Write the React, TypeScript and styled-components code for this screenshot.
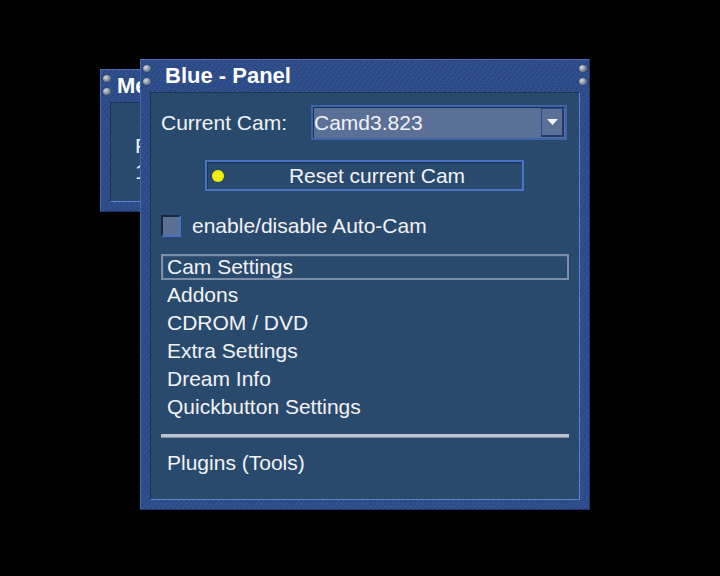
import * as React from "react";
import styled, { createGlobalStyle } from "styled-components";

const FRAME = "#2d4d8c";
const INNER = "#2a4a6d";
const TEXT = "#f2f2f4";
const FONT = `"Liberation Sans", Arial, sans-serif`;

const GlobalStyle = createGlobalStyle`
  html, body {
    margin: 0;
    padding: 0;
    background: #000;
  }
  body {
    font-family: ${FONT};
    color: ${TEXT};
  }
`;

const Desktop = styled.div`
  position: relative;
  width: 720px;
  height: 576px;
  background: #000;
  overflow: hidden;
`;

const Window = styled.div<{ x: number; y: number; w: number; h: number }>`
  position: absolute;
  left: ${({ x }) => x}px;
  top: ${({ y }) => y}px;
  width: ${({ w }) => w}px;
  height: ${({ h }) => h}px;
  box-sizing: border-box;
  overflow: hidden;
  display: flex;
  flex-direction: column;
  padding: 0 9px 9px;
  background-color: ${FRAME};
  background-image:
    repeating-linear-gradient(37deg, rgba(0, 0, 0, 0.09) 0 1px, transparent 1px 3px),
    repeating-linear-gradient(-53deg, rgba(255, 255, 255, 0.04) 0 1px, transparent 1px 4px);
  border-top: 1px solid #4a6cb0;
  border-left: 1px solid #4266a8;
  border-right: 1px solid #1d3566;
  border-bottom: 1px solid #1d3566;
`;

const TitleBar = styled.div<{ indent: number }>`
  height: 32px;
  flex: none;
  display: flex;
  align-items: center;
  padding-left: ${({ indent }) => indent}px;
  font-size: 22px;
  font-weight: bold;
  color: #fff;
  white-space: nowrap;
`;

const Screw = styled.span<{ side: "left" | "right"; top: number }>`
  position: absolute;
  ${({ side }) => (side === "left" ? "left: 2px;" : "right: 2px;")}
  top: ${({ top }) => top}px;
  width: 8px;
  height: 7px;
  border-radius: 50%;
  background: radial-gradient(circle at 35% 35%, #d8dde6 0, #8b94a6 45%, #3c475c 100%);
  box-shadow: 0 0 1px rgba(0, 0, 0, 0.6);
`;

const Inner = styled.div`
  flex: 1;
  display: flex;
  flex-direction: column;
  padding: 0 10px;
  background: ${INNER};
  border-top: 1px solid #1c3352;
  border-left: 1px solid #1c3352;
  border-right: 1px solid #5a82d0;
  border-bottom: 1px solid #5a82d0;
`;

const CamRow = styled.div`
  display: flex;
  align-items: center;
  height: 35px;
  margin-top: 12px;
`;

const Label = styled.span`
  font-size: 21px;
  width: 150px;
  flex: none;
`;

const Select = styled.div`
  width: 256px;
  height: 35px;
  box-sizing: border-box;
  display: flex;
  align-items: center;
  background: #5b7096;
  border: 2px solid #3f62ad;
  box-shadow: inset 1px 1px 0 #1c2f52;
  font-size: 21px;
  padding-left: 1px;
`;

const SelectValue = styled.span`
  flex: 1;
`;

const ArrowBox = styled.span`
  width: 23px;
  height: 29px;
  margin-right: 1px;
  box-sizing: border-box;
  display: flex;
  align-items: center;
  justify-content: center;
  border-left: 1px solid #2c4a8a;
  border-top: 1px solid #2c4a8a;
  border-right: 2px solid #21386a;
  border-bottom: 2px solid #21386a;
`;

const ResetButton = styled.div`
  margin: 20px 0 0 44px;
  width: 319px;
  height: 31px;
  box-sizing: border-box;
  display: flex;
  align-items: center;
  border: 2px solid #4673c4;
  box-shadow: inset 1px 1px 0 #1d3355;
  font-size: 21px;
`;

const Dot = styled.span`
  width: 12px;
  height: 12px;
  border-radius: 50%;
  background: #f4f000;
  margin-left: 5px;
  flex: none;
`;

const ButtonText = styled.span`
  flex: 1;
  text-align: center;
  padding-left: 8px;
`;

const CheckRow = styled.div`
  display: flex;
  align-items: center;
  margin-top: 24px;
  height: 22px;
  font-size: 21px;
  gap: 11px;
`;

const CheckBox = styled.span`
  width: 20px;
  height: 22px;
  box-sizing: border-box;
  background: #5b6f92;
  border-top: 2px solid #17273e;
  border-left: 2px solid #17273e;
  border-right: 2px solid #4a70c4;
  border-bottom: 2px solid #4a70c4;
  flex: none;
`;

const Menu = styled.div`
  display: flex;
  flex-direction: column;
  margin-top: 16px;
`;

const MenuItem = styled.div<{ selected?: boolean }>`
  height: 26px;
  margin: 1px 0;
  box-sizing: border-box;
  display: flex;
  align-items: center;
  padding-left: 4px;
  font-size: 21px;
  border: 2px solid ${({ selected }) => (selected ? "#7d8ea8" : "transparent")};
  box-shadow: ${({ selected }) => (selected ? "inset 1px 1px 0 #3e5575" : "none")};
`;

const Separator = styled.div`
  height: 3px;
  margin: 13px 0 11px 0;
  background: #bcc4d0;
  border-bottom: 1px solid #8592a6;
`;

const BackContent = styled.div`
  padding: 30px 0 0 14px;
  font-size: 21px;
  line-height: 26px;
  white-space: nowrap;
`;

const items = [
  "Cam Settings",
  "Addons",
  "CDROM / DVD",
  "Extra Settings",
  "Dream Info",
  "Quickbutton Settings",
];

const Screws = ({ right }: { right?: boolean }) => (
  <>
    <Screw side="left" top={5} />
    <Screw side="left" top={18} />
    {right && <Screw side="right" top={5} />}
    {right && <Screw side="right" top={18} />}
  </>
);

export default function App() {
  return (
    <Desktop>
      <GlobalStyle />
      <Window x={100} y={69} w={90} h={143}>
        <Screws />
        <TitleBar indent={7}>Me</TitleBar>
        <Inner>
          <BackContent>
            <div>F</div>
            <div>1</div>
          </BackContent>
        </Inner>
      </Window>
      <Window x={140} y={59} w={450} h={451}>
        <Screws right />
        <TitleBar indent={15}>Blue - Panel</TitleBar>
        <Inner>
          <CamRow>
            <Label>Current Cam:</Label>
            <Select>
              <SelectValue>Camd3.823</SelectValue>
              <ArrowBox>
                <svg width="11" height="6" viewBox="0 0 11 6">
                  <path d="M0 0 H11 L5.5 6 Z" fill="#f4f6fa" />
                </svg>
              </ArrowBox>
            </Select>
          </CamRow>
          <ResetButton>
            <Dot />
            <ButtonText>Reset current Cam</ButtonText>
          </ResetButton>
          <CheckRow>
            <CheckBox />
            <span>enable/disable Auto-Cam</span>
          </CheckRow>
          <Menu>
            {items.map((item, i) => (
              <MenuItem key={item} selected={i === 0}>
                {item}
              </MenuItem>
            ))}
          </Menu>
          <Separator />
          <MenuItem>Plugins (Tools)</MenuItem>
        </Inner>
      </Window>
    </Desktop>
  );
}
